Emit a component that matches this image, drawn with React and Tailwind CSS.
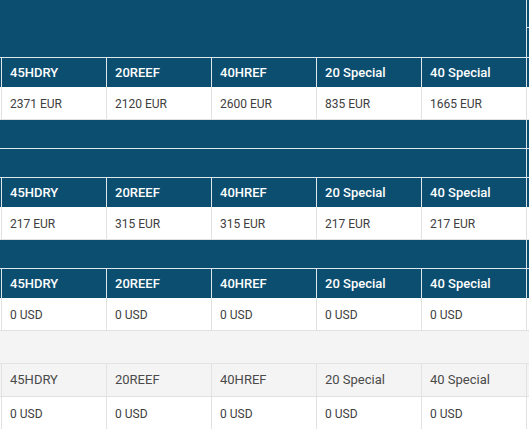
const cols = ["45HDRY", "20REEF", "40HREF", "20 Special", "40 Special"];

const tables = [
  { values: ["2371 EUR", "2120 EUR", "2600 EUR", "835 EUR", "1665 EUR"] },
  { values: ["217 EUR", "315 EUR", "315 EUR", "217 EUR", "217 EUR"] },
  { values: ["0 USD", "0 USD", "0 USD", "0 USD", "0 USD"] },
];

function BlueBand({ className }) {
  return (
    <div className={`flex bg-[#0b4e6f] ${className}`}>
      <div className="w-[526px] shrink-0" />
      <div className="w-px shrink-0 bg-[#dfe7ec]" />
      <div className="flex-1" />
    </div>
  );
}

function HeaderRow({ light }) {
  const row = light
    ? "bg-[#f4f4f4] border-t border-[#e3e3e3] h-[33px] text-[#4a4a4a] font-normal"
    : "bg-[#0b4e6f] border-t border-[#dfe7ec] h-[30px] text-white font-medium";
  const line = light ? "border-[#e3e3e3]" : "border-[#dfe7ec]";
  return (
    <div className={`flex text-[13px] ${row}`}>
      <div className="w-px shrink-0" />
      {cols.map((c) => (
        <div key={c} className={`w-[105px] shrink-0 border-l ${line} flex items-center pl-[8px]`}>
          {c}
        </div>
      ))}
      <div className={`flex-1 border-l ${line}`} />
    </div>
  );
}

function DataRow({ values, bottom }) {
  return (
    <div className={`flex h-[33px] bg-white text-[12px] text-[#404040] ${bottom ? "border-b" : "border-t"} border-[#e1e1e1]`}>
      <div className="w-px shrink-0" />
      {values.map((v, i) => (
        <div key={i} className="w-[105px] shrink-0 border-l border-[#e1e1e1] flex items-center pl-[8px] pt-px">
          {v}
        </div>
      ))}
      <div className="flex-1 border-l border-[#e1e1e1]" />
    </div>
  );
}

export default function App() {
  return (
    <div className="w-[529px] h-[429px] overflow-hidden bg-white" style={{ fontFamily: "Roboto, 'Noto Sans', sans-serif" }}>
      {/* first block: caption band has a split on the far right */}
      <div className="flex h-[57px] bg-[#0b4e6f]">
        <div className="w-[526px] shrink-0" />
        <div className="w-px shrink-0 bg-[#dfe7ec]" />
        <div className="flex-1 flex flex-col">
          <div className="h-[28px] border-b border-[#dfe7ec]" />
        </div>
      </div>
      <HeaderRow />
      <DataRow values={tables[0].values} bottom />

      <BlueBand className="h-[29px] border-b border-[#dfe7ec]" />
      <BlueBand className="h-[28px]" />
      <HeaderRow />
      <DataRow values={tables[1].values} bottom />

      <BlueBand className="h-[28px]" />
      <HeaderRow />
      <DataRow values={tables[2].values} bottom />

      <div className="h-[32px] bg-[#f4f4f4]" />
      <HeaderRow light />
      <DataRow values={tables[2].values} />
    </div>
  );
}
